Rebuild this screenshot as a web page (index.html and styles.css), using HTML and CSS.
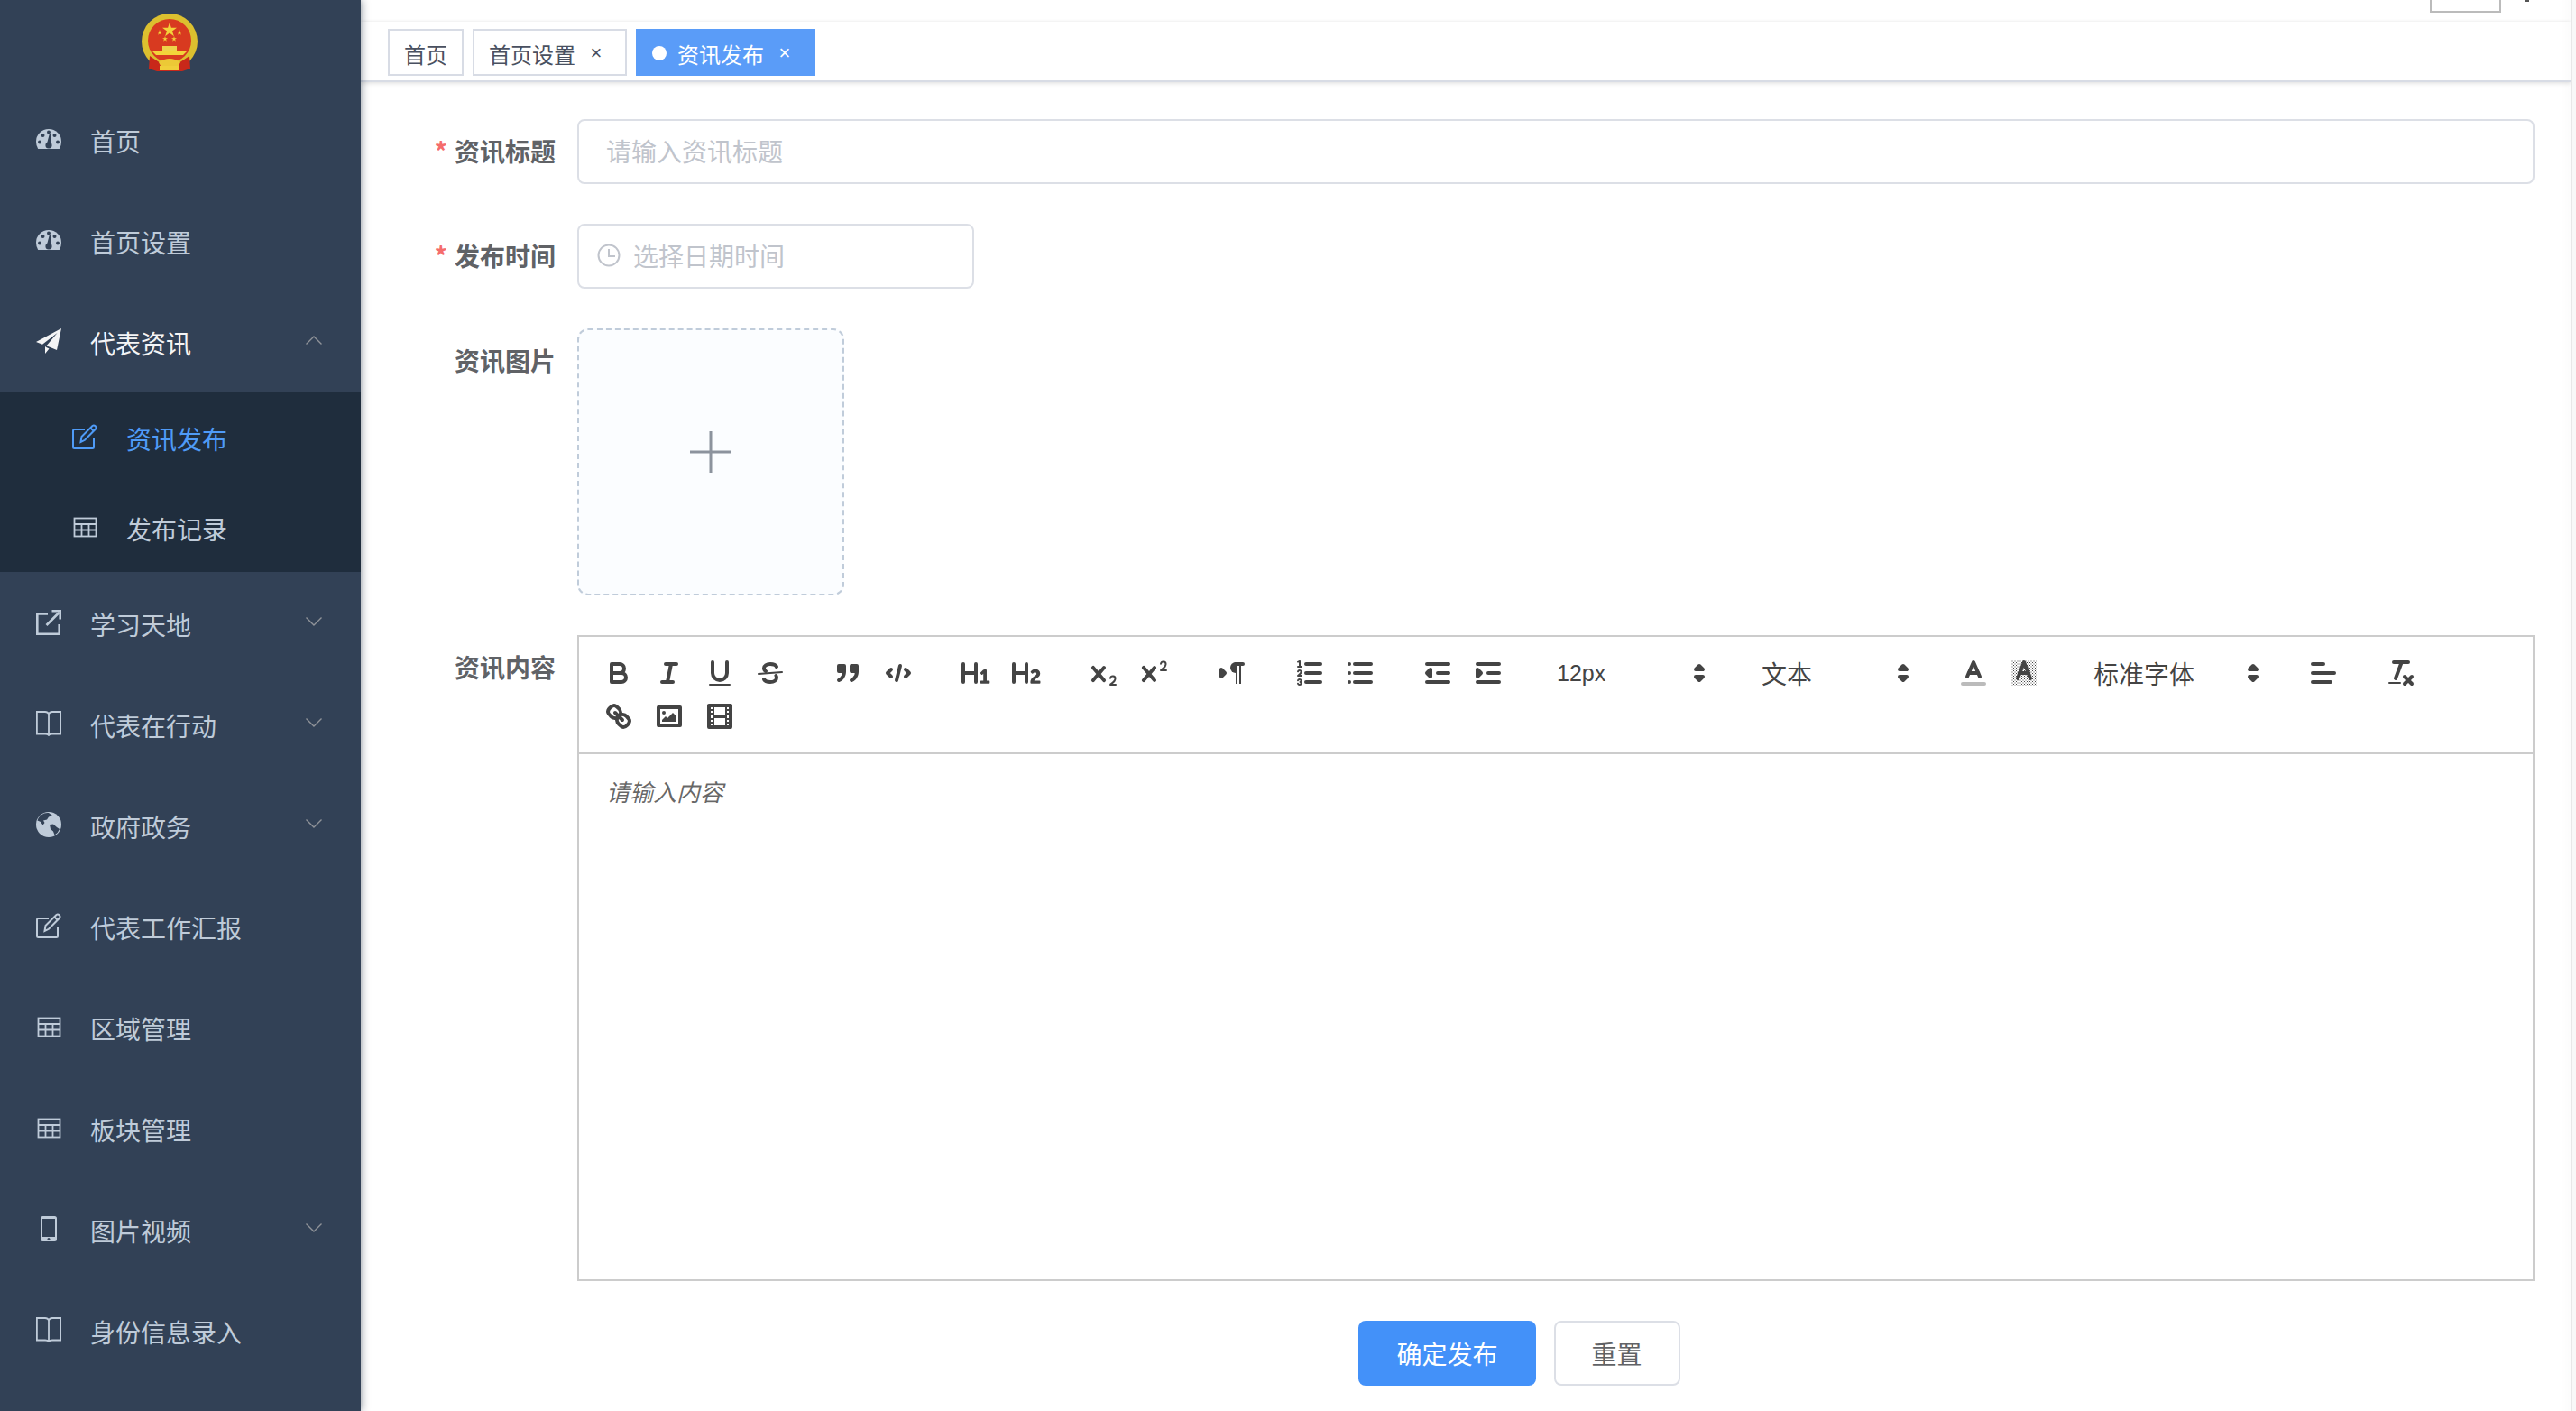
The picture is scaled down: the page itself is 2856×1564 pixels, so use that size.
FILE: index.html
```html
<!DOCTYPE html>
<html lang="zh-CN">
<head>
    <meta charset="UTF-8">
    <title>资讯发布</title>
    <link rel="stylesheet" href="styles.css">
</head>
<body>
    <svg class="sprite" width="0" height="0">
        <symbol id="i-dashboard" viewBox="0 0 28 28">
            <path fill="currentColor" d="M2.2 25Q0 21.5 0 17A14 14 0 0 1 28 17Q28 21.500 25.800 25Z"/>
            <g fill="#324156">
                <circle cx="4" cy="17.500" r="2"/><circle cx="7.500" cy="10" r="2"/><circle cx="14" cy="6.500" r="2"/>
                <circle cx="20.500" cy="10" r="2"/><circle cx="24" cy="17.500" r="2"/><circle cx="14" cy="21" r="3.600"/>
                <path d="M12 19L14.800 8.500H16.600L16.600 19.500Z"/>
            </g>
        </symbol>
        <symbol id="i-send" viewBox="0 0 28 28">
            <path fill="currentColor" d="M28 0L0 15L7 17.800L23.500 5L11.500 19.300L23 24ZM10 19.500V28L14.500 22.600L10.800 20.800Z"/>
        </symbol>
        <symbol id="i-edit" viewBox="0 0 28 28">
            <g fill="none" stroke="currentColor" stroke-width="2">
                <path d="M14 6H2.500Q1 6 1 7.500V25.500Q1 27 2.500 27H22.500Q24 27 24 25.500V15"/>
                <path d="M9.500 20L10.500 14L22.500 2Q24 .8 25.800 2.300Q27.200 4 26 5.500L14 17.800Z"/>
                <path d="M20.500 4.500L24 8"/>
            </g>
        </symbol>
        <symbol id="i-table" viewBox="0 0 28 28">
            <g fill="none" stroke="currentColor" stroke-width="1.800">
                <rect x="2.500" y="4.500" width="24" height="20"/>
                <path d="M2.500 11H26.500M2.500 17.500H26.500M10.500 11V24.500M18.500 11V24.500"/>
            </g>
        </symbol>
        <symbol id="i-link" viewBox="0 0 28 28">
            <g fill="none" stroke="currentColor" stroke-width="2.600">
                <path d="M13 4.500H1.300V26.700H25.700V16"/>
                <path d="M11.500 17L25.500 3"/>
                <path d="M17.500 1.300H26.700V10.500"/>
            </g>
        </symbol>
        <symbol id="i-book" viewBox="0 0 28 28">
            <path fill="none" stroke="currentColor" stroke-width="1.800" d="M14 3.500Q13 1 10 1H.9V25.500H10Q13 25.500 14 27Q15 25.500 18 25.500H27.100V1H18Q15 1 14 3.500ZM14 3.500V27"/>
        </symbol>
        <symbol id="i-globe" viewBox="0 0 28 28">
            <circle cx="14" cy="14" r="14" fill="currentColor"/>
            <path fill="#324156" d="M9 1.500Q3 4 1.500 9.500L5 11L7.500 14.500L9.500 12L8 9.500L12 8.500L14 5.500L18 4L14 1Q11 .8 9 1.500ZM15 14L19 13.500L23 17L26 19Q24.500 23 20.500 25.500L19 21.500L16 19Z"/>
        </symbol>
        <symbol id="i-tablet" viewBox="0 0 28 28">
            <path fill="currentColor" fill-rule="evenodd" d="M7.500 0H20.500Q23 0 23 2.500V25.500Q23 28 20.500 28H7.500Q5 28 5 25.500V2.500Q5 0 7.500 0ZM7 3V23H21V3Z"/>
            <circle cx="14" cy="25.500" r="1.500" fill="#324156"/>
        </symbol>
        <symbol id="i-up" viewBox="0 0 18 10">
            <path fill="none" stroke="currentColor" stroke-width="1.400" d="M.5 9.500L9 1L17.500 9.500"/>
        </symbol>
        <symbol id="i-down" viewBox="0 0 18 10">
            <path fill="none" stroke="currentColor" stroke-width="1.400" d="M.5 .5L9 9L17.500 .5"/>
        </symbol>
        <symbol id="i-picker" viewBox="0 0 18 18">
            <polygon class="ql-stroke ql-fill" points="7 11 9 13 11 11 7 11"/>
            <polygon class="ql-stroke ql-fill" points="7 7 9 5 11 7 7 7"/>
        </symbol>
        <pattern id="dither" width="1.500" height="1.500" patternUnits="userSpaceOnUse">
            <rect width=".5" height=".5" fill="#444"/>
            <rect x=".75" y=".75" width=".5" height=".5" fill="#444"/>
        </pattern>
    </svg>

    <aside class="sidebar">
        <div class="logo">
            <svg width="64" height="64" viewBox="0 0 64 64">
                <circle cx="32" cy="30" r="31" fill="#dcc02f"/>
                <path d="M10 46L9 60L18 63H46L55 60L54 46L42 54H22Z" fill="#c9281a"/>
                <circle cx="32" cy="29" r="24" fill="#d83a20"/>
                <path d="M32 9L33.900 14.800H40L35 18.400L36.900 24.200L32 20.600L27.100 24.200L29 18.400L24 14.800H30.100Z" fill="#f3d33a"/>
                <path d="M21 17L21.700 19.200H24L22.100 20.500L22.800 22.700L21 21.300L19.200 22.700L19.900 20.500L18 19.200H20.300Z" fill="#f3d33a"/>
                <path d="M43 17L43.700 19.200H46L44.100 20.500L44.800 22.700L43 21.300L41.200 22.700L41.900 20.500L40 19.200H42.300Z" fill="#f3d33a"/>
                <path d="M27 24L27.700 26.200H30L28.100 27.500L28.800 29.700L27 28.300L25.200 29.700L25.900 27.500L24 26.200H26.300Z" fill="#f3d33a"/>
                <path d="M37 24L37.700 26.200H40L38.100 27.500L38.800 29.700L37 28.300L35.200 29.700L35.900 27.500L34 26.200H36.300Z" fill="#f3d33a"/>
                <path d="M24 35H40V41H24Z" fill="#eed24a"/>
                <path d="M13 41H51L47 45H17Z" fill="#f3d33a"/>
                <path d="M20 53Q32 45 44 53L42 57H22Z" fill="#ecc936"/>
                <path d="M21 57H43V62H21Z" fill="#f0cf3a"/>
            </svg>
        </div>
        <nav class="menu">
            <a class="menu-item"><svg class="menu-icon"><use href="#i-dashboard"/></svg><span>首页</span></a>
            <a class="menu-item"><svg class="menu-icon"><use href="#i-dashboard"/></svg><span>首页设置</span></a>
            <a class="menu-item is-open"><svg class="menu-icon"><use href="#i-send"/></svg><span>代表资讯</span><svg class="menu-arrow"><use href="#i-up"/></svg></a>
            <div class="submenu">
                <a class="submenu-item is-active"><svg class="menu-icon"><use href="#i-edit"/></svg><span>资讯发布</span></a>
                <a class="submenu-item"><svg class="menu-icon"><use href="#i-table"/></svg><span>发布记录</span></a>
            </div>
            <a class="menu-item"><svg class="menu-icon"><use href="#i-link"/></svg><span>学习天地</span><svg class="menu-arrow"><use href="#i-down"/></svg></a>
            <a class="menu-item"><svg class="menu-icon"><use href="#i-book"/></svg><span>代表在行动</span><svg class="menu-arrow"><use href="#i-down"/></svg></a>
            <a class="menu-item"><svg class="menu-icon"><use href="#i-globe"/></svg><span>政府政务</span><svg class="menu-arrow"><use href="#i-down"/></svg></a>
            <a class="menu-item"><svg class="menu-icon"><use href="#i-edit"/></svg><span>代表工作汇报</span></a>
            <a class="menu-item"><svg class="menu-icon"><use href="#i-table"/></svg><span>区域管理</span></a>
            <a class="menu-item"><svg class="menu-icon"><use href="#i-table"/></svg><span>板块管理</span></a>
            <a class="menu-item"><svg class="menu-icon"><use href="#i-tablet"/></svg><span>图片视频</span><svg class="menu-arrow"><use href="#i-down"/></svg></a>
            <a class="menu-item"><svg class="menu-icon"><use href="#i-book"/></svg><span>身份信息录入</span></a>
        </nav>
    </aside>

    <main class="main">
        <header class="navbar">
            <div class="navbar-box"></div>
            <div class="navbar-dot"></div>
        </header>
        <div class="tags">
            <span class="tag">首页</span>
            <span class="tag">首页设置<i class="tag-close">×</i></span>
            <span class="tag is-active"><i class="tag-dot"></i>资讯发布<i class="tag-close">×</i></span>
        </div>

        <form class="form">
            <div class="form-item">
                <label class="form-label is-required">资讯标题</label>
                <div class="form-control"><input class="input" placeholder="请输入资讯标题"></div>
            </div>
            <div class="form-item">
                <label class="form-label is-required">发布时间</label>
                <div class="form-control">
                    <div class="date-input">
                        <svg class="clock" viewBox="0 0 26 26"><circle cx="13" cy="13" r="11.500"/><path d="M13 6V14H20"/></svg>
                        <input class="input-bare" placeholder="选择日期时间">
                    </div>
                </div>
            </div>
            <div class="form-item">
                <label class="form-label">资讯图片</label>
                <div class="form-control">
                    <div class="upload">
                        <svg class="upload-plus" viewBox="0 0 46 46"><path d="M23 0V46M0 23H46"/></svg>
                    </div>
                </div>
            </div>
            <div class="form-item">
                <label class="form-label">资讯内容</label>
                <div class="form-control">
                    <div class="editor">
                        <div class="toolbar">
                            <div class="toolbar-row">
                                <span class="ql-formats">
                                    <button type="button"><svg viewBox="0 0 18 18"><path class="ql-stroke" d="M5,4H9.5A2.5,2.5,0,0,1,12,6.5v0A2.5,2.5,0,0,1,9.5,9H5A0,0,0,0,1,5,9V4A0,0,0,0,1,5,4Z"/><path class="ql-stroke" d="M5,9h5.5A2.5,2.5,0,0,1,13,11.500v0A2.5,2.5,0,0,1,10.500,14H5a0,0,0,0,1,0,0V9A0,0,0,0,1,5,9Z"/></svg></button>
                                    <button type="button"><svg viewBox="0 0 18 18"><line class="ql-stroke" x1="7" x2="13" y1="4" y2="4"/><line class="ql-stroke" x1="5" x2="11" y1="14" y2="14"/><line class="ql-stroke" x1="8" x2="10" y1="14" y2="4"/></svg></button>
                                    <button type="button"><svg viewBox="0 0 18 18"><path class="ql-stroke" d="M5,3V9a4.012,4.012,0,0,0,4,4H9a4.012,4.012,0,0,0,4-4V3"/><rect class="ql-fill" height="1" rx=".5" ry=".5" width="12" x="3" y="15"/></svg></button>
                                    <button type="button"><svg viewBox="0 0 18 18"><line class="ql-stroke ql-thin" x1="15.500" x2="2.500" y1="8.500" y2="9.500"/><path class="ql-stroke" d="M12.500 5.500C12 4.500 10.800 4 9 4 6.900 4 5.500 5 5.500 6.300c0 .7.300 1.300 1 1.700"/><path class="ql-stroke" d="M5.500 12.500C6 13.500 7.200 14 9 14c2.100 0 3.500-1 3.500-2.400 0-.4-.1-.8-.3-1.100"/></svg></button>
                                </span>
                                <span class="ql-formats">
                                    <button type="button"><svg viewBox="0 0 18 18"><rect class="ql-fill ql-stroke" height="3" width="3" x="4" y="5"/><rect class="ql-fill ql-stroke" height="3" width="3" x="11" y="5"/><path class="ql-stroke" d="M7,8c0,4.031-3,5-3,5"/><path class="ql-stroke" d="M14,8c0,4.031-3,5-3,5"/></svg></button>
                                    <button type="button"><svg viewBox="0 0 18 18"><polyline class="ql-stroke" points="5 7 3 9 5 11"/><polyline class="ql-stroke" points="13 7 15 9 13 11"/><line class="ql-stroke" x1="10" x2="8" y1="5" y2="13"/></svg></button>
                                </span>
                                <span class="ql-formats">
                                    <button type="button"><svg viewBox="0 0 18 18"><path class="ql-fill" d="M10,4V14a1,1,0,0,1-2,0V10H3v4a1,1,0,0,1-2,0V4A1,1,0,0,1,3,4V8H8V4a1,1,0,0,1,2,0Zm6.06787,9.209H14.98975V7.59863a.54085.54085,0,0,0-.605-.60547h-.62744a1.01119,1.01119,0,0,0-.748.29688L11.645,8.56641a.5435.5435,0,0,0-.022.8584l.28613.30762a.53861.53861,0,0,0,.84717.0332l.09912-.08789a1.2137,1.2137,0,0,0,.2417-.35254h.02246s-.01123.30859-.01123.60547V13.209H12.041a.54085.54085,0,0,0-.605.60547v.43945a.54085.54085,0,0,0,.605.60547h4.02686a.54085.54085,0,0,0,.605-.60547v-.43945A.54085.54085,0,0,0,16.06787,13.209Z"/></svg></button>
                                    <button type="button"><svg viewBox="0 0 18 18"><path class="ql-fill" d="M16.73975,13.81445v.43945a.54085.54085,0,0,1-.605.60547H11.855a.58392.58392,0,0,1-.64893-.60547V14.0127c0-2.90527,3.39941-3.42187,3.39941-4.55469a.77675.77675,0,0,0-.84717-.78125,1.17684,1.17684,0,0,0-.83594.38477c-.2749.26367-.561.374-.85791.13184l-.4292-.34082c-.30811-.24219-.38525-.51758-.1543-.81445a2.97155,2.97155,0,0,1,2.45361-1.17676,2.45393,2.45393,0,0,1,2.68408,2.40918c0,2.45312-3.1792,2.92676-3.27832,3.93848h2.79443A.54085.54085,0,0,1,16.73975,13.81445ZM9,3A.99974.99974,0,0,0,8,4V8H3V4A1,1,0,0,0,1,4V14a1,1,0,0,0,2,0V10H8v4a1,1,0,0,0,2,0V4A.99974.99974,0,0,0,9,3Z"/></svg></button>
                                </span>
                                <span class="ql-formats">
                                    <button type="button"><svg viewBox="0 0 18 18"><path class="ql-fill" d="M15.5,15H13.861a3.858,3.858,0,0,0,1.914-2.975,1.8,1.8,0,0,0-1.6-1.751A1.921,1.921,0,0,0,12.021,11.7a0.50013,0.50013,0,1,0,.957.291h0a0.914,0.914,0,0,1,1.053-.725,0.81,0.81,0,0,1,.744.762c0,1.076-1.16971,1.86982-1.93971,2.43082A1.45639,1.45639,0,0,0,12,15.5a0.5,0.5,0,0,0,.5.5h3A0.5,0.5,0,0,0,15.5,15Z"/><path class="ql-fill" d="M9.65,5.241a1,1,0,0,0-1.409.108L6,7.964,3.759,5.349A1,1,0,0,0,2.192,6.59178Q2.2,6.6,2.241,6.651L4.684,9.5,2.241,12.35A1,1,0,0,0,3.71,13.70722q0.02557-.02768.049-0.05722L6,11.036,8.241,13.65a1,1,0,1,0,1.567-1.24277Q9.8,12.4,9.759,12.35L7.316,9.5,9.759,6.651A1,1,0,0,0,9.65,5.241Z"/></svg></button>
                                    <button type="button"><svg viewBox="0 0 18 18"><path class="ql-fill" d="M15.5,7H13.861a4.015,4.015,0,0,0,1.914-2.975,1.8,1.8,0,0,0-1.6-1.751A1.922,1.922,0,0,0,12.021,3.7a0.5,0.5,0,1,0,.957.291,0.917,0.917,0,0,1,1.053-.725,0.81,0.81,0,0,1,.744.762c0,1.077-1.164,1.925-1.934,2.486A1.423,1.423,0,0,0,12,7.5a0.5,0.5,0,0,0,.5.5h3A0.5,0.5,0,0,0,15.5,7Z"/><path class="ql-fill" d="M9.651,5.241a1,1,0,0,0-1.41.108L6,7.964,3.759,5.349a1,1,0,1,0-1.519,1.3L4.683,9.5,2.241,12.35a1,1,0,1,0,1.519,1.3L6,11.036,8.241,13.65a1,1,0,0,0,1.519-1.3L7.317,9.5,9.759,6.651A1,1,0,0,0,9.651,5.241Z"/></svg></button>
                                </span>
                                <span class="ql-formats">
                                    <button type="button"><svg viewBox="0 0 18 18"><polygon class="ql-stroke ql-fill" points="3 11 5 9 3 7 3 11"/><line class="ql-stroke" x1="15" x2="11" y1="4" y2="4"/><path class="ql-fill" d="M11,3a3,3,0,0,0,0,6h1V3H11Z"/><rect class="ql-fill" height="11" width="1" x="11" y="4"/><rect class="ql-fill" height="11" width="1" x="13" y="4"/></svg></button>
                                </span>
                                <span class="ql-formats">
                                    <button type="button"><svg viewBox="0 0 18 18"><line class="ql-stroke" x1="7" x2="15" y1="4" y2="4"/><line class="ql-stroke" x1="7" x2="15" y1="9" y2="9"/><line class="ql-stroke" x1="7" x2="15" y1="14" y2="14"/><line class="ql-stroke ql-thin" x1="2.500" x2="4.500" y1="5.500" y2="5.500"/><path class="ql-fill" d="M3.5,6A0.5,0.5,0,0,1,3,5.5V3.085l-0.276.138A0.5,0.5,0,0,1,2.053,3c-0.124-.247-0.023-0.324.224-0.447l1-.5A0.5,0.5,0,0,1,4,2.500v3A0.5,0.5,0,0,1,3.5,6Z"/><path class="ql-stroke ql-thin" d="M4.5,10.500h-2c0-.234,1.85-1.076,1.85-2.234A0.959,0.959,0,0,0,2.5,8.156"/><path class="ql-stroke ql-thin" d="M2.5,14.846a0.959,0.959,0,0,0,1.85-.109A0.7,0.7,0,0,0,3.75,14a0.688,0.688,0,0,0,.6-0.736,0.959,0.959,0,0,0-1.85-.109"/></svg></button>
                                    <button type="button"><svg viewBox="0 0 18 18"><line class="ql-stroke" x1="6" x2="15" y1="4" y2="4"/><line class="ql-stroke" x1="6" x2="15" y1="9" y2="9"/><line class="ql-stroke" x1="6" x2="15" y1="14" y2="14"/><line class="ql-stroke" x1="3" x2="3" y1="4" y2="4"/><line class="ql-stroke" x1="3" x2="3" y1="9" y2="9"/><line class="ql-stroke" x1="3" x2="3" y1="14" y2="14"/></svg></button>
                                </span>
                                <span class="ql-formats">
                                    <button type="button"><svg viewBox="0 0 18 18"><line class="ql-stroke" x1="3" x2="15" y1="14" y2="14"/><line class="ql-stroke" x1="3" x2="15" y1="4" y2="4"/><line class="ql-stroke" x1="9" x2="15" y1="9" y2="9"/><polyline class="ql-stroke ql-fill" points="5 7 5 11 3 9 5 7"/></svg></button>
                                    <button type="button"><svg viewBox="0 0 18 18"><line class="ql-stroke" x1="3" x2="15" y1="14" y2="14"/><line class="ql-stroke" x1="3" x2="15" y1="4" y2="4"/><line class="ql-stroke" x1="9" x2="15" y1="9" y2="9"/><polyline class="ql-stroke ql-fill" points="3 7 3 11 5 9 3 7"/></svg></button>
                                </span>
                                <span class="ql-formats">
                                    <span class="picker"><span class="picker-label is-small">12px</span><svg class="picker-arrow"><use href="#i-picker"/></svg></span>
                                </span>
                                <span class="ql-formats">
                                    <span class="picker"><span class="picker-label">文本</span><svg class="picker-arrow"><use href="#i-picker"/></svg></span>
                                </span>
                                <span class="ql-formats">
                                    <button type="button"><svg viewBox="0 0 18 18"><line class="ql-stroke ql-light" x1="3" x2="15" y1="15" y2="15"/><polyline class="ql-stroke" points="5.500 11 9 3 12.500 11"/><line class="ql-stroke" x1="11.630" x2="6.380" y1="9" y2="9"/></svg></button>
                                    <button type="button"><svg viewBox="0 0 18 18"><rect x="2" y="2" width="14" height="14" fill="url(#dither)"/><polyline class="ql-stroke" points="5.500 12 9 3 12.500 12"/><line class="ql-stroke" x1="11.630" x2="6.380" y1="9" y2="9"/></svg></button>
                                </span>
                                <span class="ql-formats">
                                    <span class="picker is-wide"><span class="picker-label">标准字体</span><svg class="picker-arrow"><use href="#i-picker"/></svg></span>
                                </span>
                                <span class="ql-formats">
                                    <button type="button"><svg viewBox="0 0 18 18"><line class="ql-stroke" x1="3" x2="15" y1="9" y2="9"/><line class="ql-stroke" x1="3" x2="13" y1="14" y2="14"/><line class="ql-stroke" x1="3" x2="9" y1="4" y2="4"/></svg></button>
                                </span>
                                <span class="ql-formats">
                                    <button type="button"><svg viewBox="0 0 18 18"><line class="ql-stroke" x1="5" x2="13" y1="3" y2="3"/><line class="ql-stroke" x1="6" x2="9.350" y1="12" y2="3"/><line class="ql-stroke" x1="11" x2="15" y1="11" y2="15"/><line class="ql-stroke" x1="15" x2="11" y1="11" y2="15"/><rect class="ql-fill" height="1" rx=".5" ry=".5" width="7" x="2" y="14"/></svg></button>
                                </span>
                            </div>
                            <div class="toolbar-row">
                                <span class="ql-formats">
                                    <button type="button"><svg viewBox="0 0 18 18"><line class="ql-stroke" x1="7" x2="11" y1="7" y2="11"/><path class="ql-stroke" d="M8.9,4.577a3.476,3.476,0,0,1,.36,4.679A3.476,3.476,0,0,1,4.577,8.9C3.185,7.5,2.035,6.4,4.217,4.217S7.5,3.185,8.9,4.577Z"/><path class="ql-stroke" d="M13.423,9.1a3.476,3.476,0,0,0-4.679-.36,3.476,3.476,0,0,0,.36,4.679c1.392,1.392,2.5,2.542,4.679.36S14.815,10.5,13.423,9.1Z"/></svg></button>
                                    <button type="button"><svg viewBox="0 0 18 18"><rect class="ql-stroke" height="10" width="12" x="3" y="4"/><circle class="ql-fill" cx="6" cy="7" r="1"/><polyline class="ql-fill" points="5 12 5 11 7 9 8 10 11 7 13 9 13 12 5 12"/></svg></button>
                                    <button type="button"><svg viewBox="0 0 18 18"><rect class="ql-stroke" height="12" width="12" x="3" y="3"/><rect class="ql-fill" height="12" width="1" x="5" y="3"/><rect class="ql-fill" height="12" width="1" x="12" y="3"/><rect class="ql-fill" height="2" width="8" x="5" y="8"/><rect class="ql-fill" height="1" width="3" x="3" y="5"/><rect class="ql-fill" height="1" width="3" x="3" y="7"/><rect class="ql-fill" height="1" width="3" x="3" y="10"/><rect class="ql-fill" height="1" width="3" x="3" y="12"/><rect class="ql-fill" height="1" width="3" x="12" y="5"/><rect class="ql-fill" height="1" width="3" x="12" y="7"/><rect class="ql-fill" height="1" width="3" x="12" y="10"/><rect class="ql-fill" height="1" width="3" x="12" y="12"/></svg></button>
                                </span>
                            </div>
                        </div>
                        <div class="editor-body">请输入内容</div>
                    </div>
                </div>
            </div>
            <div class="form-actions">
                <button type="button" class="btn btn-primary">确定发布</button>
                <button type="button" class="btn">重置</button>
            </div>
        </form>
    </main>
    <div class="scrollbar"></div>
</body>
</html>
```
FILE: styles.css
```css
* {
    box-sizing: border-box;
}
html, body {
    height: 100%;
    margin: 0;
    overflow: hidden;
}
body {
    display: flex;
    font-family: "Noto Sans CJK SC", "Liberation Sans", sans-serif;
    font-size: 28px;
    color: #606266;
    background-color: #fff;
}
.sprite {
    position: absolute;
}

/* sidebar */
.sidebar {
    position: relative;
    z-index: 2;
    flex: 0 0 400px;
    background-color: #324156;
    box-shadow: 2px 0 8px rgba(0, 21, 41, 0.35);
}
.logo {
    display: flex;
    justify-content: center;
    height: 98px;
    padding: 16px 24px 0 0;
}
.menu-item {
    display: flex;
    align-items: center;
    height: 112px;
    padding-left: 40px;
    color: #bfcbd9;
}
.menu-item span, .submenu-item span {
    padding-top: 4px;
}
.menu-item.is-open {
    color: #f4f4f5;
}
.menu-icon {
    flex: none;
    width: 28px;
    height: 28px;
    margin-right: 32px;
}
.menu-arrow {
    width: 18px;
    height: 10px;
    margin: -3px 43px 0 auto;
    color: #909399;
}
.submenu {
    background-color: #1f2d3d;
}
.submenu-item {
    display: flex;
    align-items: center;
    height: 100px;
    padding-left: 80px;
    color: #bfcbd9;
}
.submenu-item.is-active {
    color: #4f9bf7;
}

/* top of the page */
.main {
    flex: 1;
    min-width: 0;
    box-shadow: inset -12px 0 12px -8px rgba(0, 0, 0, 0.02);
}
.navbar {
    display: flex;
    justify-content: flex-end;
    align-items: flex-start;
    height: 24px;
    padding-right: 46px;
}
.navbar-box {
    width: 79px;
    height: 14px;
    margin-right: 27px;
    border: 2px solid #bbb;
    border-top: none;
}
.navbar-dot {
    width: 4px;
    height: 2px;
    background-color: #555;
}
.tags {
    display: flex;
    gap: 10px;
    height: 67px;
    padding: 8px 0 0 30px;
    border-bottom: 2px solid #d8dce5;
    box-shadow: 0 -1px 3px rgba(0, 0, 0, 0.05), 0 2px 4px rgba(0, 0, 0, 0.1);
}
.tag {
    display: flex;
    align-items: center;
    height: 52px;
    padding: 2px 16px 0;
    border: 2px solid #d8dce5;
    font-size: 24px;
    color: #495060;
}
.tag.is-active {
    border-color: #5a9cf8;
    background-color: #5a9cf8;
    color: #fff;
}
.tag-dot {
    width: 16px;
    height: 16px;
    margin-right: 12px;
    border-radius: 50%;
    background-color: #fff;
}
.tag-close {
    width: 32px;
    margin-left: 7px;
    font-size: 22px;
    font-style: normal;
    font-family: "Liberation Sans", sans-serif;
    text-align: center;
}

/* form */
.form {
    padding: 41px 40px 0 0;
}
.form-item {
    display: flex;
    margin-bottom: 44px;
}
.form-label {
    flex: 0 0 240px;
    padding-right: 24px;
    font-weight: 700;
    line-height: 70px;
    text-align: right;
}
.form-label.is-required::before {
    content: "*";
    margin-right: 8px;
    color: #f56c6c;
}
.form-control {
    flex: 1;
    min-width: 0;
}
.input {
    display: block;
    width: 100%;
    height: 72px;
    padding: 0 30px 2px;
    border: 2px solid #dcdfe6;
    border-radius: 8px;
    outline: none;
    font: inherit;
}
.input::placeholder, .input-bare::placeholder {
    color: #c0c4cc;
}
.date-input {
    display: flex;
    align-items: center;
    width: 440px;
    height: 72px;
    padding: 0 0 2px 20px;
    border: 2px solid #dcdfe6;
    border-radius: 8px;
}
.clock {
    flex: none;
    width: 26px;
    height: 26px;
    margin-right: 14px;
    fill: none;
    stroke: #c0c4cc;
    stroke-width: 2;
}
.input-bare {
    width: 340px;
    padding: 0;
    border: none;
    outline: none;
    font: inherit;
}
.upload {
    display: flex;
    justify-content: center;
    align-items: center;
    width: 296px;
    height: 296px;
    padding-bottom: 22px;
    border: 2px dashed #c0ccda;
    border-radius: 12px;
    background-color: #fbfdff;
}
.upload-plus {
    width: 46px;
    height: 46px;
    fill: none;
    stroke: #8c939d;
    stroke-width: 3;
}

/* editor */
.editor {
    border: 2px solid #ccc;
}
.toolbar {
    padding: 16px;
    border-bottom: 2px solid #ccc;
}
.toolbar-row {
    display: flex;
}
.ql-formats {
    display: flex;
    margin-right: 30px;
}
.ql-formats button {
    width: 56px;
    height: 48px;
    padding: 6px 10px;
    border: none;
    background: none;
}
.ql-formats svg {
    display: block;
}
.ql-stroke {
    fill: none;
    stroke: #444;
    stroke-width: 2;
    stroke-linecap: round;
    stroke-linejoin: round;
}
.ql-thin {
    stroke-width: 1;
}
.ql-light {
    stroke: #bbb;
}
.ql-fill {
    fill: #444;
}
.picker {
    display: flex;
    align-items: center;
    width: 196px;
    height: 48px;
    padding: 0 2px 0 16px;
    font-size: 28px;
    color: #444;
}
.picker.is-wide {
    width: 216px;
}
.picker-label {
    padding-left: 3px;
}
.picker-label.is-small {
    padding-left: 2px;
    font-family: "Liberation Sans", sans-serif;
    font-size: 25px;
}
.picker-arrow {
    width: 36px;
    height: 36px;
    margin-left: auto;
}
.editor-body {
    height: 582px;
    padding: 22px 30px;
    font-size: 26px;
    font-style: italic;
    line-height: 37px;
    color: rgba(0, 0, 0, 0.6);
}
.form-actions {
    display: flex;
    justify-content: center;
    gap: 20px;
    padding-left: 159px;
}
.btn {
    height: 72px;
    padding: 0 40px;
    border: 2px solid #dcdfe6;
    border-radius: 8px;
    background-color: #fff;
    font: inherit;
    color: #606266;
}
.btn-primary {
    border-color: #4391f9;
    background-color: #4391f9;
    color: #fff;
}
.scrollbar {
    flex: 0 0 6px;
    border-left: 2px solid #e8e8e8;
    background-color: #f8f8f8;
}
```
